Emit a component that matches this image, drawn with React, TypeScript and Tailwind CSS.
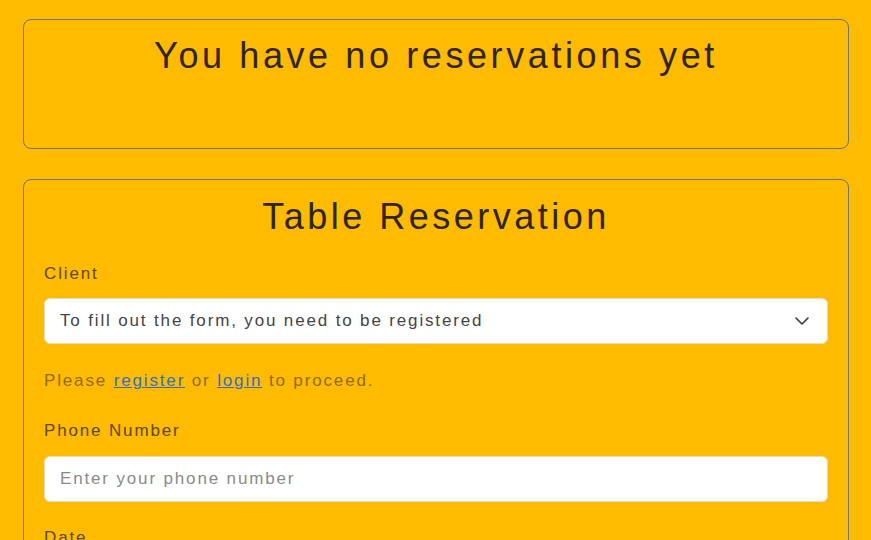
import { ChevronDown } from "lucide-react";

const font = { fontFamily: '"Liberation Sans", Arial, sans-serif' };

export default function App() {
  return (
    <div className="h-[540px] overflow-hidden bg-[#ffbb00] pl-[23px] pr-[22px] pt-[19px]" style={font}>
      <section className="h-[130px] rounded-lg border border-[#6c757d] pt-[12px]">
        <h2 className="text-center text-[36px] leading-[48px] tracking-[3.6px] text-[#2e2508]">
          You have no reservations yet
        </h2>
      </section>

      <section className="mt-[30px] rounded-lg border border-[#6c757d] px-5 pt-[15px] pb-6">
        <h2 className="text-center text-[36px] leading-[44px] tracking-[3.5px] text-[#2e2508]">
          Table Reservation
        </h2>

        <label className="mt-[23px] mb-[12px] block text-[17px] leading-6 tracking-[1.85px] text-[#5c4706]">Client</label>
        <div className="flex h-[46px] items-center justify-between rounded-md border border-[#e6dcc0] bg-white pl-[15px] pr-[13px]">
          <span className="text-[17px] tracking-[1.85px] text-[#444444]">To fill out the form, you need to be registered</span>
          <ChevronDown className="h-6 w-6 text-[#343a40]" strokeWidth={1.6} />
        </div>
        <p className="mt-[25px] text-[17px] leading-6 tracking-[1.85px] text-[#8c6c12]">
          Please{" "}
          <a href="#" className="text-[#2f6fd0] underline">register</a>{" "}
          or{" "}
          <a href="#" className="text-[#2f6fd0] underline">login</a>{" "}
          to proceed.
        </p>

        <label className="mt-[26px] mb-[13px] block text-[17px] leading-6 tracking-[1.85px] text-[#5c4706]">Phone Number</label>
        <input
          type="text"
          placeholder="Enter your phone number"
          className="block h-[46px] w-full rounded-md border border-[#e6dcc0] bg-white px-[15px] text-[17px] tracking-[1.85px] text-[#444444] placeholder:text-[#8a8a8a]"
        />

        <label className="mt-[24px] mb-[12px] block text-[17px] leading-6 tracking-[1.85px] text-[#5c4706]">Date</label>
        <input type="date" className="block h-[46px] w-full rounded-md border border-[#e6dcc0] bg-white px-[15px]" />
      </section>
    </div>
  );
}
